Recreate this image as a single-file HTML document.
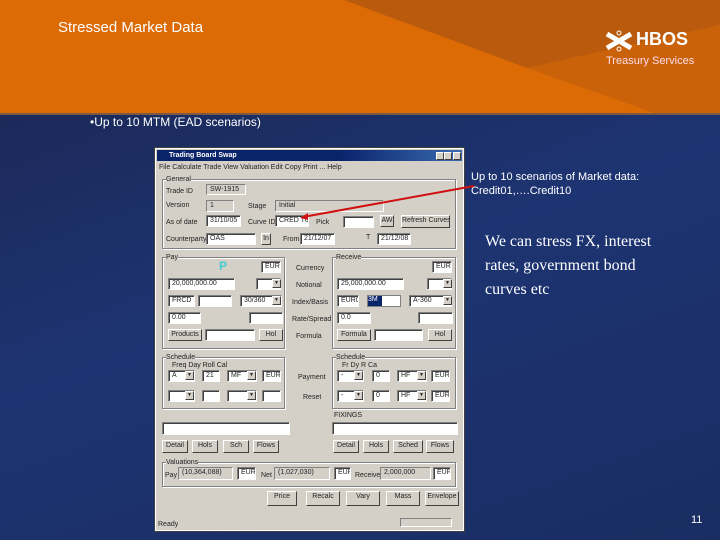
<!DOCTYPE html>
<html><head><meta charset="utf-8"><style>
*{margin:0;padding:0;box-sizing:border-box}
body{width:720px;height:540px;overflow:hidden;position:relative;font-family:"Liberation Sans",sans-serif;background:linear-gradient(160deg,#1b2550 0%,#1d3472 50%,#1a2d63 100%)}
#hdr{position:absolute;left:0;top:0;width:720px;height:115px;background:#dc6a05;overflow:hidden;border-bottom:2px solid #7a5a40}
.a{position:absolute}
.dlg{position:absolute;left:155px;top:148px;width:309px;height:383px;background:#d4d0c8;border:1px solid #fff;outline:1px solid #404040;font-size:7px;color:#222}
.dlg div{white-space:nowrap;overflow:hidden}
.i{position:absolute;background:#fff;border:1px solid #808080;border-right-color:#fff;border-bottom-color:#fff;box-shadow:inset 1px 1px 0 #404040;font-size:7px;padding-left:3px;line-height:9px}
.g{position:absolute;background:#d4d0c8;border:1px solid #808080;border-right-color:#fff;border-bottom-color:#fff;font-size:7px;padding-left:3px;line-height:9px}
.b{position:absolute;background:#d4d0c8;border:1px solid #fff;border-right-color:#404040;border-bottom-color:#404040;font-size:7px;text-align:center;line-height:10px}
.f{position:absolute;border:1px solid #808080;box-shadow:1px 1px 0 #fff,inset 1px 1px 0 #fff}
.l{position:absolute;font-size:7px;line-height:9px}
.dd{position:absolute;width:9px;height:9px;background:#d4d0c8;border:1px solid #fff;border-right-color:#404040;border-bottom-color:#404040;font-size:5px;text-align:center;line-height:7px}
</style></head><body>
<div id="hdr">
<div class="a" style="left:0;top:0;width:720px;height:115px;background:#b95a0c;clip-path:polygon(344px 0,720px 0,720px 25px,527px 68px)"></div>
<div class="a" style="left:0;top:0;width:720px;height:115px;background:#c96208;clip-path:polygon(527px 68px,720px 25px,720px 115px,660px 115px)"></div>
<div class="a" style="left:58px;top:19px;color:#fff;font-size:15px;">Stressed Market Data</div>
<div class="a" style="left:604px;top:30px;width:30px;height:22px">
<svg width="30" height="22" viewBox="0 0 30 22"><path d="M3 4 L27 18 M3 18 L27 4" stroke="#fff" stroke-width="5"/><circle cx="15" cy="3" r="2" fill="none" stroke="#fff"/><circle cx="15" cy="19" r="2" fill="none" stroke="#fff"/></svg></div>
<div class="a" style="left:636px;top:29px;color:#fff;font-size:18px;font-weight:bold">HBOS</div>
<div class="a" style="left:606px;top:55px;color:#fde;font-size:11px">Treasury Services</div>
</div>
<div class="a" style="left:90px;top:115px;color:#fff;font-size:12px">•Up to 10 MTM (EAD scenarios)</div>
<div class="a" style="left:471px;top:170px;color:#fff;font-size:11px;line-height:14px">Up to 10 scenarios of Market data:<br>Credit01,….Credit10</div>
<div class="a" style="left:485px;top:230px;color:#fff;font-family:'Liberation Serif',serif;font-size:16px;line-height:24px">We can stress FX, interest<br>rates, government bond<br>curves etc</div>
<div class="a" style="left:691px;top:514px;color:#fff;font-size:11px">11</div>

<div class="dlg">
<div class="a" style="left:1px;top:1px;width:305px;height:11px;background:linear-gradient(90deg,#0a246a 60%,#3a6ab0);color:#fff;font-weight:bold;font-size:7px;line-height:11px;padding-left:12px">Trading Board Swap</div>
<div class="b" style="left:280px;top:3px;width:8px;height:8px"></div><div class="b" style="left:288px;top:3px;width:8px;height:8px"></div><div class="b" style="left:297px;top:3px;width:8px;height:8px"></div>
<div class="l" style="left:3px;top:14px">File  Calculate  Trade  View  Valuation  Edit  Copy  Print  ...  Help</div>
<div class="f" style="left:6px;top:30px;width:294px;height:70px"></div>
<div class="l" style="left:10px;top:26px;background:#d4d0c8">General</div>
<div class="l" style="left:10px;top:38px">Trade ID</div><div class="g" style="left:50px;top:35px;width:40px;height:11px">SW-1915</div>
<div class="l" style="left:10px;top:52px">Version</div><div class="g" style="left:50px;top:51px;width:28px;height:12px">1</div>
<div class="l" style="left:92px;top:53px">Stage</div><div class="g" style="left:119px;top:51px;width:109px;height:12px">Initial</div>
<div class="l" style="left:10px;top:69px">As of date</div><div class="i" style="left:50px;top:66px;width:35px;height:12px">31/10/05</div>
<div class="l" style="left:92px;top:69px">Curve ID</div><div class="i" style="left:119px;top:66px;width:34px;height:12px">CRED T01</div>
<div class="l" style="left:160px;top:69px">Pick</div><div class="i" style="left:187px;top:67px;width:31px;height:12px"></div>
<div class="b" style="left:224px;top:66px;width:14px;height:12px">AW</div>
<div class="b" style="left:245px;top:66px;width:49px;height:13px">Refresh Curves</div>
<div class="l" style="left:10px;top:86px">Counterparty</div><div class="i" style="left:50px;top:84px;width:50px;height:12px">OAS</div>
<div class="b" style="left:105px;top:84px;width:10px;height:12px">In</div>
<div class="l" style="left:127px;top:86px">From</div><div class="i" style="left:144px;top:84px;width:35px;height:12px">21/12/07</div>
<div class="l" style="left:210px;top:84px">T</div><div class="i" style="left:221px;top:84px;width:34px;height:12px">21/12/08</div>
<div class="f" style="left:6px;top:108px;width:123px;height:92px"></div>
<div class="l" style="left:10px;top:104px;background:#d4d0c8">Pay</div>
<div class="a" style="left:63px;top:110px;color:#4cc;font-size:12px;font-weight:bold">P</div>
<div class="i" style="left:105px;top:112px;width:20px;height:12px">EUR</div>
<div class="i" style="left:12px;top:129px;width:67px;height:12px">20,000,000.00</div>
<div class="i" style="left:100px;top:129px;width:25px;height:12px"></div><div class="dd" style="left:116px;top:130px">▼</div>
<div class="i" style="left:12px;top:146px;width:27px;height:12px">FRCD</div>
<div class="i" style="left:42px;top:146px;width:34px;height:12px"></div>
<div class="i" style="left:84px;top:146px;width:42px;height:12px">30/360</div><div class="dd" style="left:116px;top:147px">▼</div>
<div class="i" style="left:12px;top:163px;width:33px;height:12px">0.00</div>
<div class="i" style="left:93px;top:163px;width:34px;height:12px"></div>
<div class="b" style="left:12px;top:180px;width:34px;height:12px">Products</div>
<div class="i" style="left:49px;top:180px;width:50px;height:12px"></div>
<div class="b" style="left:103px;top:180px;width:24px;height:12px">Hol</div>
<div class="l" style="left:140px;top:115px">Currency</div>
<div class="l" style="left:140px;top:132px">Notional</div>
<div class="l" style="left:136px;top:149px">Index/Basis</div>
<div class="l" style="left:136px;top:166px">Rate/Spread</div>
<div class="l" style="left:140px;top:183px">Formula</div>
<div class="f" style="left:176px;top:108px;width:124px;height:92px"></div>
<div class="l" style="left:180px;top:104px;background:#d4d0c8">Receive</div>
<div class="i" style="left:276px;top:112px;width:20px;height:12px">EUR</div>
<div class="i" style="left:181px;top:129px;width:67px;height:12px">25,000,000.00</div>
<div class="i" style="left:271px;top:129px;width:25px;height:12px"></div><div class="dd" style="left:287px;top:130px">▼</div>
<div class="i" style="left:181px;top:146px;width:22px;height:12px">EUR0</div>
<div class="a" style="left:211px;top:146px;width:34px;height:12px;background:#fff;border:1px solid #808080"><div style="width:14px;height:10px;background:#0a246a;color:#fff;font-size:7px">3M</div></div>
<div class="i" style="left:253px;top:146px;width:43px;height:12px">A-360</div><div class="dd" style="left:287px;top:147px">▼</div>
<div class="i" style="left:181px;top:163px;width:34px;height:12px">0.0</div>
<div class="i" style="left:262px;top:163px;width:35px;height:12px"></div>
<div class="b" style="left:181px;top:180px;width:34px;height:12px">Formula</div>
<div class="i" style="left:218px;top:180px;width:49px;height:12px"></div>
<div class="b" style="left:272px;top:180px;width:24px;height:12px">Hol</div>
<div class="f" style="left:6px;top:208px;width:123px;height:52px"></div>
<div class="l" style="left:10px;top:204px;background:#d4d0c8">Schedule</div>
<div class="l" style="left:16px;top:212px">Freq      Day      Roll      Cal</div>
<div class="i" style="left:12px;top:221px;width:27px;height:12px">A</div><div class="dd" style="left:29px;top:222px">▼</div>
<div class="i" style="left:46px;top:221px;width:18px;height:12px">21</div>
<div class="i" style="left:71px;top:221px;width:30px;height:12px">MF</div><div class="dd" style="left:91px;top:222px">▼</div>
<div class="i" style="left:106px;top:221px;width:19px;height:12px">EUR</div>
<div class="i" style="left:12px;top:241px;width:27px;height:12px"></div><div class="dd" style="left:29px;top:242px">▼</div>
<div class="i" style="left:46px;top:241px;width:18px;height:12px"></div>
<div class="i" style="left:71px;top:241px;width:30px;height:12px"></div><div class="dd" style="left:91px;top:242px">▼</div>
<div class="i" style="left:106px;top:241px;width:19px;height:12px"></div>
<div class="l" style="left:142px;top:224px">Payment</div><div class="l" style="left:147px;top:244px">Reset</div>
<div class="f" style="left:176px;top:208px;width:124px;height:52px"></div>
<div class="l" style="left:180px;top:204px;background:#d4d0c8">Schedule</div>
<div class="l" style="left:186px;top:212px">Fr        Dy        R        Ca</div>
<div class="i" style="left:181px;top:221px;width:27px;height:12px">-</div><div class="dd" style="left:198px;top:222px">▼</div>
<div class="i" style="left:216px;top:221px;width:18px;height:12px">0</div>
<div class="i" style="left:241px;top:221px;width:30px;height:12px">HF</div><div class="dd" style="left:261px;top:222px">▼</div>
<div class="i" style="left:275px;top:221px;width:19px;height:12px">EUR</div>
<div class="i" style="left:181px;top:241px;width:27px;height:12px">-</div><div class="dd" style="left:198px;top:242px">▼</div>
<div class="i" style="left:216px;top:241px;width:18px;height:12px">0</div>
<div class="i" style="left:241px;top:241px;width:30px;height:12px">HF</div><div class="dd" style="left:261px;top:242px">▼</div>
<div class="i" style="left:275px;top:241px;width:19px;height:12px">EUR</div>
<div class="l" style="left:178px;top:262px">FIXINGS</div>
<div class="i" style="left:6px;top:273px;width:128px;height:13px"></div>
<div class="i" style="left:176px;top:273px;width:126px;height:13px"></div>
<div class="b" style="left:6px;top:291px;width:26px;height:13px">Detail</div>
<div class="b" style="left:36px;top:291px;width:26px;height:13px">Hols</div>
<div class="b" style="left:67px;top:291px;width:26px;height:13px">Sch</div>
<div class="b" style="left:97px;top:291px;width:26px;height:13px">Flows</div>
<div class="b" style="left:177px;top:291px;width:26px;height:13px">Detail</div>
<div class="b" style="left:207px;top:291px;width:26px;height:13px">Hols</div>
<div class="b" style="left:237px;top:291px;width:30px;height:13px">Sched</div>
<div class="b" style="left:270px;top:291px;width:28px;height:13px">Flows</div>
<div class="f" style="left:6px;top:313px;width:294px;height:25px"></div>
<div class="l" style="left:10px;top:309px;background:#d4d0c8">Valuations</div>
<div class="l" style="left:9px;top:322px">Pay</div><div class="g" style="left:22px;top:318px;width:55px;height:13px">(10,364,088)</div>
<div class="i" style="left:81px;top:318px;width:19px;height:13px">EUR</div>
<div class="l" style="left:105px;top:322px">Net</div><div class="g" style="left:118px;top:318px;width:56px;height:13px">(1,027,030)</div>
<div class="i" style="left:178px;top:318px;width:17px;height:13px">EUR</div>
<div class="l" style="left:199px;top:322px">Receive</div><div class="g" style="left:224px;top:318px;width:51px;height:13px">2,000,000</div>
<div class="i" style="left:277px;top:318px;width:18px;height:13px">EUR</div>
<div class="b" style="left:111px;top:342px;width:30px;height:15px">Price</div>
<div class="b" style="left:150px;top:342px;width:34px;height:15px">Recalc</div>
<div class="b" style="left:190px;top:342px;width:34px;height:15px">Vary</div>
<div class="b" style="left:230px;top:342px;width:34px;height:15px">Mass</div>
<div class="b" style="left:269px;top:342px;width:34px;height:15px">Envelope</div>
<div class="l" style="left:2px;top:371px">Ready</div>
<div class="g" style="left:244px;top:369px;width:52px;height:9px"></div>
</div>
<svg class="a" style="left:0;top:0" width="720" height="540"><path d="M474 186 L303 217" stroke="#d01010" stroke-width="2"/><path d="M300 218 L308 213 L308 220 Z" fill="#d01010"/></svg>
</body></html>
